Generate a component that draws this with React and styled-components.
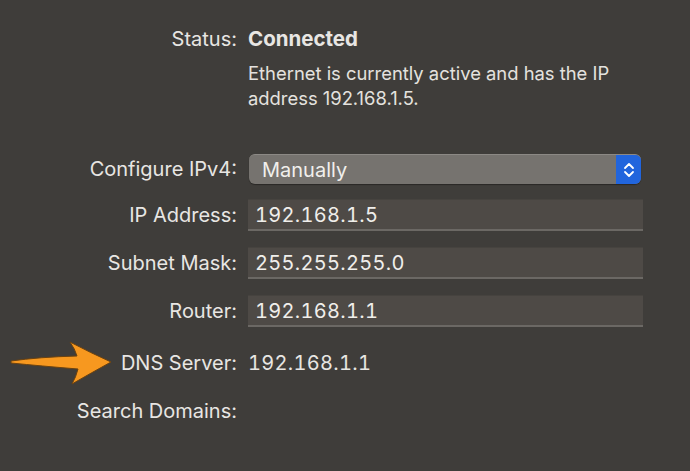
import React from 'react';
import styled, { createGlobalStyle } from 'styled-components';

const GlobalStyle = createGlobalStyle`
    html, body {
        margin: 0;
        padding: 0;
        background: #3f3d3a;
    }
    body {
        font-family: Inter, "Noto Sans", "Liberation Sans", sans-serif;
        color: #e8e6e3;
        -webkit-font-smoothing: antialiased;
    }
`

const Pane = styled.div`
    width: 690px;
    height: 471px;
    box-sizing: border-box;
    padding-top: 27px;
    display: flex;
    flex-direction: column;
    overflow: hidden;
`

const Row = styled.div`
    display: grid;
    grid-template-columns: 237px 395px;
    column-gap: 11px;
    align-items: center;
    min-height: ${props => props.$height || 24}px;
    margin-top: ${props => props.$gap || 0}px;
`

const Label = styled.div`
    display: flex;
    justify-content: flex-end;
    align-items: center;
    gap: 8px;
    height: 24px;
    font-size: 20px;
    line-height: 24px;
    white-space: nowrap;
`

const Value = styled.div`
    font-size: ${props => props.$bold ? 20.5 : 20}px;
    line-height: 24px;
    font-weight: ${props => props.$bold ? 700 : 400};
    font-variant-numeric: tabular-nums;
    letter-spacing: ${props => props.$bold ? 0 : 0.3}px;
    white-space: nowrap;
`

const Note = styled.div`
    font-size: 18.4px;
    line-height: 25px;
    color: #e4e2df;
`

const Popup = styled.div`
    height: 30px;
    margin-left: 1px;
    width: 392px;
    box-sizing: border-box;
    display: flex;
    align-items: stretch;
    border-radius: 6px;
    background: #76736f;
    border-top: 1px solid #8c8985;
    box-shadow: 0 1px 1px rgba(0, 0, 0, 0.35);
    overflow: hidden;
`

const PopupText = styled.div`
    flex: 1;
    display: flex;
    align-items: center;
    padding-left: 13px;
    font-size: 20px;
    color: #f1efec;
`

const Stepper = styled.div`
    width: 25px;
    background: #2165dd;
    display: flex;
    align-items: center;
    justify-content: center;
`

const Field = styled.div`
    height: 32px;
    box-sizing: border-box;
    display: flex;
    align-items: center;
    padding-left: 7px;
    font-size: 20px;
    font-variant-numeric: tabular-nums;
    letter-spacing: 0.3px;
    background: #4e4a46;
    border-top: 1px solid #46433f;
    border-bottom: 2px solid #6b6864;
    color: #f0eeeb;
`

const PointerSvg = styled.svg`
    margin: -10px 0;
    flex-shrink: 0;
`

function Chevrons() {
    return (
        <svg width="14" height="20" viewBox="0 0 14 20">
            <path d="M3 8 L7 4 L11 8" fill="none" stroke="#fff" strokeWidth="1.8" strokeLinecap="round" strokeLinejoin="round" />
            <path d="M3 12 L7 16 L11 12" fill="none" stroke="#fff" strokeWidth="1.8" strokeLinecap="round" strokeLinejoin="round" />
        </svg>
    )
}

// orange pointer in front of the DNS label
function Pointer() {
    return (
        <PointerSvg width="104" height="44" viewBox="0 0 104 44">
            <path
                d="M2 20 Q30 16 68 15 Q66 8 61 1 Q82 12 102 21 Q82 32 63 43 Q67 36 69 28 Q32 25 2 22 Z"
                fill="#f7981f"
                stroke="#6b4210"
                strokeWidth="1"
                strokeLinejoin="round"
            />
        </PointerSvg>
    )
}

function App() {
    const fields = [
        { label: 'IP Address:', value: '192.168.1.5', gap: 15 },
        { label: 'Subnet Mask:', value: '255.255.255.0', gap: 16 },
        { label: 'Router:', value: '192.168.1.1', gap: 16 },
    ];
    return (
        <>
            <GlobalStyle />
            <Pane>
                <Row>
                    <Label>Status:</Label>
                    <Value $bold>Connected</Value>
                </Row>
                <Row $gap={10}>
                    <div />
                    <Note>
                        Ethernet is currently active and has the IP<br />
                        address 192.168.1.5.
                    </Note>
                </Row>
                <Row $gap={43} $height={30}>
                    <Label>Configure IPv4:</Label>
                    <Popup>
                        <PopupText>Manually</PopupText>
                        <Stepper><Chevrons /></Stepper>
                    </Popup>
                </Row>
                {fields.map(f => (
                    <Row key={f.label} $gap={f.gap} $height={32}>
                        <Label>{f.label}</Label>
                        <Field>{f.value}</Field>
                    </Row>
                ))}
                <Row $gap={20} $height={32}>
                    <Label>
                        <Pointer />
                        DNS Server:
                    </Label>
                    <Value>192.168.1.1</Value>
                </Row>
                <Row $gap={16} $height={32}>
                    <Label>Search Domains:</Label>
                    <div />
                </Row>
            </Pane>
        </>
    )
}

export default App;
